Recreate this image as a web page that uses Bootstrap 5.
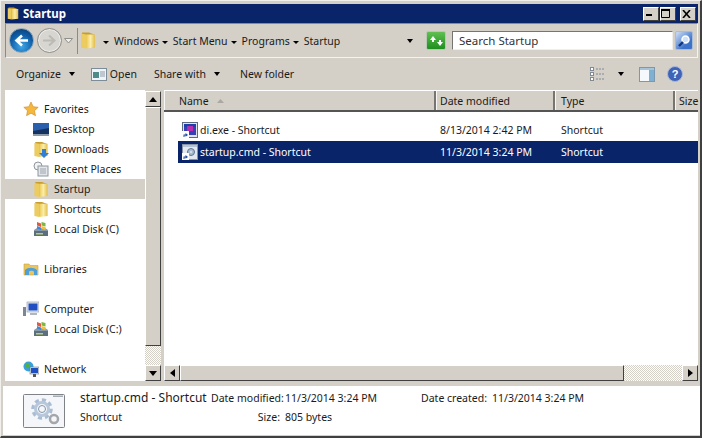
<!DOCTYPE html>
<html lang="en">
<head>
<meta charset="UTF-8">
<title>Startup</title>
<link href="https://cdn.jsdelivr.net/npm/bootstrap@5.3.0/dist/css/bootstrap.min.css" rel="stylesheet">
<style>
html, body { margin: 0; background: #d4d0c8; overflow: hidden; }
body { font-family: "Noto Sans", "Liberation Sans", sans-serif; font-size: 10.5px; line-height: 14px; color: #1a1a1a; }
.win-frame { width: 702px; height: 438px; background: #d4d0c8; border-style: solid; border-width: 1px 2px 2px 1px; border-color: #f2f0ec #404040 #404040 #f2f0ec; padding: 3px 2px 0 4px; }
.win-title { height: 19px; background: #0a246a; color: #fff; font-weight: 700; font-size: 11.5px; padding: 0 2px 0 2px; flex: none; }
.win-title svg { margin-right: 4px; }
.cap-btn { width: 16px; height: 14px; margin-left: 1px; background: #d4d0c8; border: 1px solid; border-color: #fff #404040 #404040 #fff; color: #000; }
.win-nav { height: 35px; border: 1px solid; border-color: #8c8a84 #f4f3ef #f4f3ef #8c8a84; padding: 0 2px 0 3px; flex: none; }
.nav-round { width: 25px; height: 25px; border-radius: 50%; flex: none; }
.nav-back { background: radial-gradient(circle at 50% 75%, #3fa8e8, #0f5ea8 55%, #0a3766); border: 1px solid #8fa5b5; }
.nav-fwd { background: #d8d6d0; border: 1px solid #8f8f8b; margin-left: 3px; box-shadow: inset 0 0 0 1px #eeede9; }
.nav-drop { margin: 0 4px 0 2px; }
.addr-box { width: 340px; height: 26px; padding-left: 2px; border-left: 1px solid #8c8a84; flex: none; }
.addr-crumb { margin-left: 3px; }
.addr-crumb:first-child { margin-left: 7px; }
.addr-crumb i, .tri-down { display: inline-block; width: 0; height: 0; border-style: solid; border-width: 4px 3.5px 0 3.5px; border-color: #000 transparent transparent transparent; }
.addr-crumb i { margin-right: 5px; vertical-align: 1px; border-width: 3px 3.5px 0 3.5px; }
.addr-crumbs { flex: 1; }
.refresh-btn { width: 20px; height: 19px; margin: 0 6px 0 9px; background: linear-gradient(#5fc04f, #1f8f20); border: 1px solid #b9c7b4; border-radius: 2px; flex: none; }
.search-box { width: 221px; height: 19px; background: #fff; padding-left: 6px; border: 1px solid; border-color: #77756f #f0efeb #f0efeb #77756f; flex: none; color: #333; font-size: 11.5px; }
.search-btn { width: 18px; height: 19px; margin-left: 2px; background: linear-gradient(135deg, #cfe0f6, #3d72c9 70%); border: 1px solid #a9bcd8; border-radius: 2px; flex: none; }
.win-tools { height: 32px; padding: 0 15px 0 11px; flex: none; }
.tool-item { flex: none; }
.ms-icon { margin-left: 16px; }
.ms-open { margin-left: 3px; }
.ms-share { margin-left: 17px; }
.ms-folder { margin-left: 20px; }
.ms-views { margin-left: 12px; }
.ms-pane { margin-left: 15px; }
.ms-help { margin-left: 12px; }
.win-body { height: 291px; flex: none; }
.side-pane { width: 140px; background: #fff; padding-top: 9px; flex: none; }
.side-row { height: 20px; padding-left: 18px; }
.side-row svg { margin-right: 5px; flex: none; }
.side-row.side-sub { padding-left: 28px; }
.side-row.side-on { background: #d4d0c8; }
.side-gap { height: 20px; }
.vbar { width: 16px; flex: none; padding-top: 1px; }
.sc-btn { width: 16px; height: 16px; background: #d4d0c8; border: 1px solid; border-color: #fff #404040 #404040 #fff; flex: none; }
.sc-thumb { background: #d4d0c8; border: 1px solid; border-color: #fff #404040 #404040 #fff; }
.sc-hatch { background-color: #fff; background-image: repeating-conic-gradient(#d4d0c8 0 25%, #fff 0 50%); background-size: 2px 2px; }
.sc-vthumb { height: 239px; }
.sc-vhatch { height: 19px; }
.main-pane { width: 534px; margin-left: 3px; padding-top: 1px; flex: none; background: #fff; }
.list-head { height: 21px; background: #d4d0c8; border-bottom: 2px solid #555; flex: none; }
.head-cell { height: 19px; padding-left: 15px; border-right: 2px solid #77756f; box-shadow: inset 1px 0 0 #f7f6f2; }
.cw-name { width: 272px; flex: none; }
.cw-date { width: 119px; flex: none; padding-left: 4px; }
.cw-type { width: 120px; flex: none; padding-left: 6px; }
.cw-size { flex: 1; white-space: nowrap; border-right: 0; padding-left: 4px; }
.list-area { flex: 1; background: #fff; padding: 7px 0 0 14px; }
.file-row { height: 22px; }
.file-row.file-on { background: #0a246a; color: #fff; }
.fc-name { width: 262px; padding-left: 4px; flex: none; }
.fc-name svg { margin-right: 2px; flex: none; }
.fc-date { width: 121px; flex: none; }
.hbar { height: 16px; flex: none; }
.sc-hthumb { width: 444px; flex: none; }
.sc-hmid { flex: 1; }
.win-gapbar { height: 5px; background: #d4d0c8; flex: none; }
.win-details { height: 49px; background: #fff; margin-left: -2px; margin-right: -2px; padding-left: 20px; flex: none; }
.det-icon { margin-right: 15px; flex: none; }
.det-grid { display: grid; grid-template-columns: 131px 74px 136px 71px 1fr; grid-auto-rows: 19px; margin-top: -1px; }
.det-grid > div { white-space: nowrap; }
.det-name { font-size: 12px; }
.det-label { text-align: right; padding-right: 5px; }
</style>
</head>
<body>
<svg width="0" height="0" class="position-absolute">
  <defs>
    <linearGradient id="fg" x1="0" x2="1" y1="0" y2="0"><stop offset="0" stop-color="#e9c64f"/><stop offset=".5" stop-color="#fbeeaa"/><stop offset="1" stop-color="#e2bd4c"/></linearGradient>
    <symbol id="ico-folder" viewBox="0 0 16 18">
      <path d="M2 1h7l5 2v13H2z" fill="#c89d2e"/>
      <path d="M1 2l5 1v14l-5-1z" fill="#eccb60"/>
      <path d="M6 3h9v13l-9 1z" fill="url(#fg)"/>
    </symbol>
    <symbol id="ico-disk" viewBox="0 0 16 16">
      <path d="M1 9l3-2h8l3 2v6H1z" fill="#8a99a8"/>
      <rect x="1" y="10" width="14" height="5" fill="#5c6f7f"/>
      <rect x="3" y="12" width="7" height="1.500" fill="#b9d06a"/>
      <path d="M4 1l4 1.500V6L4 4.500z" fill="#e4593a"/>
      <path d="M8.500 1l4 1v3.500l-4-1z" fill="#7cb644"/>
      <path d="M4 5l4 1.500v2.500l-4-1.500z" fill="#3d86d8"/>
      <path d="M8.500 5l4 1v3l-4-1z" fill="#eec23f"/>
    </symbol>
    <symbol id="ico-shortcut" viewBox="0 0 7 7">
      <rect width="7" height="7" fill="#fff"/>
      <path d="M1.500 6V3.500h2V2L6 4 3.500 5.800V4.600h-1V6z" fill="#1f4e9c"/>
    </symbol>
  </defs>
</svg>

<div class="win-frame d-flex flex-column">
  <div class="win-title d-flex align-items-center">
    <svg width="12" height="15"><use href="#ico-folder"/></svg>
    <span class="flex-grow-1">Startup</span>
    <div class="cap-btn d-flex align-items-end justify-content-center pb-1"><svg width="7" height="2"><rect width="6" height="2"/></svg></div>
    <div class="cap-btn d-flex align-items-center justify-content-center"><svg width="10" height="9"><path d="M.5 1.500h8v7h-8z" fill="none" stroke="#000"/><rect width="9" height="2"/></svg></div>
    <div class="cap-btn d-flex align-items-center justify-content-center ms-1"><svg width="9" height="8"><path d="M1 0l7 8M8 0L1 8" stroke="#000" stroke-width="1.600" fill="none"/></svg></div>
  </div>

  <div class="win-nav d-flex align-items-center">
    <div class="nav-round nav-back d-flex align-items-center justify-content-center"><svg width="15" height="13"><path d="M14 6.500H4M8 1.500l-5.500 5 5.500 5" fill="none" stroke="#fff" stroke-width="2.600"/></svg></div>
    <div class="nav-round nav-fwd d-flex align-items-center justify-content-center"><svg width="15" height="13"><path d="M1 6.500h10M7 1.500l5.500 5-5.500 5" fill="none" stroke="#bcbab5" stroke-width="2"/></svg></div>
    <svg class="nav-drop" width="9" height="6"><path d="M.5.500h8L4.500 5z" fill="#eeeeea" stroke="#8f8f8b"/></svg>
    <div class="addr-box d-flex align-items-center">
      <svg width="16" height="19" class="flex-none"><use href="#ico-folder"/></svg>
      <div class="addr-crumbs d-flex align-items-center">
        <span class="addr-crumb"><i></i>Windows</span>
        <span class="addr-crumb"><i></i>Start Menu</span>
        <span class="addr-crumb"><i></i>Programs</span>
        <span class="addr-crumb"><i></i>Startup</span>
      </div>
      <span class="tri-down me-1"></span>
    </div>
    <div class="refresh-btn d-flex align-items-center justify-content-center"><svg width="15" height="12"><path d="M1 5l3-4 3 4H5v2H3V5zM14 7l-3 4-3-4h2V5h2v2z" fill="#fff"/></svg></div>
    <div class="search-box d-flex align-items-center">Search Startup</div>
    <div class="search-btn d-flex align-items-center justify-content-center"><svg width="14" height="14"><circle cx="8.500" cy="5.500" r="3.500" fill="#cfe3fb" stroke="#fff" stroke-width="1.500"/><path d="M6 8l-4 4" stroke="#12357f" stroke-width="2.400"/></svg></div>
  </div>

  <div class="win-tools d-flex align-items-center">
    <span class="tool-item">Organize</span><span class="tri-down ms-2"></span>
    <svg class="tool-item ms-icon" width="16" height="13"><rect x=".5" y=".5" width="15" height="12" fill="#f0f4f8" stroke="#7d8c99"/><rect x="2" y="4" width="6" height="6" fill="#4f8a8a"/><path d="M9 4h5M9 6h5M9 8h5" stroke="#8d9aa6"/></svg>
    <span class="tool-item ms-open">Open</span>
    <span class="tool-item ms-share">Share with</span><span class="tri-down ms-2"></span>
    <span class="tool-item ms-folder">New folder</span>
    <span class="flex-grow-1"></span>
    <svg class="tool-item" width="16" height="15"><g fill="#fff" stroke="#7f8a94"><rect x=".5" y=".5" width="3" height="3"/><rect x=".5" y="5.500" width="3" height="3"/><rect x=".5" y="10.500" width="3" height="3"/></g><path d="M6 2h9M6 7h9M6 12h9" stroke="#7f8a94" stroke-dasharray="2 1"/></svg>
    <span class="tri-down ms-views"></span>
    <svg class="tool-item ms-pane" width="16" height="15"><rect x=".5" y=".5" width="15" height="14" fill="#f5f9fc" stroke="#7c98ae"/><rect x="1" y="1" width="14" height="2" fill="#a6c3d8"/><rect x="10" y="3" width="5" height="11" fill="#7fb0d2"/></svg>
    <svg class="tool-item ms-help" width="16" height="16"><circle cx="8" cy="8" r="7.500" fill="#3f63b5" stroke="#aab9d8"/><text x="8" y="12" text-anchor="middle" fill="#fff" font-size="11" font-weight="700" font-family="Liberation Sans, sans-serif">?</text></svg>
  </div>

  <div class="win-body d-flex">
    <div class="side-pane">
      <div class="side-row d-flex align-items-center"><svg width="16" height="16"><path d="M8 1l2.200 4.700 5 .6-3.700 3.400 1 5L8 12.200 3.500 14.700l1-5L.8 6.300l5-.6z" fill="#f5b73c" stroke="#c98a2a" stroke-width=".6"/></svg>Favorites</div>
      <div class="side-row side-sub d-flex align-items-center"><svg width="16" height="13"><rect width="16" height="12" fill="#2a5fae"/><path d="M0 8l16-3v7H0z" fill="#15315f"/><rect y="11" width="16" height="2" fill="#8b99a8"/></svg>Desktop</div>
      <div class="side-row side-sub d-flex align-items-center"><svg width="16" height="17"><use href="#ico-folder"/><path d="M9 8h4v4h3l-5 5-5-5h3z" fill="#2f80d6"/></svg>Downloads</div>
      <div class="side-row side-sub d-flex align-items-center"><svg width="16" height="16"><circle cx="5" cy="5" r="4" fill="#f3f3f1" stroke="#8d979f"/><rect x="5" y="5" width="10" height="10" fill="#e3e6e9" stroke="#8d979f"/><path d="M7 8h6M7 10h6M7 12h6" stroke="#9ba4ac"/></svg>Recent Places</div>
      <div class="side-row side-sub side-on d-flex align-items-center"><svg width="16" height="17"><use href="#ico-folder"/></svg>Startup</div>
      <div class="side-row side-sub d-flex align-items-center"><svg width="16" height="17"><use href="#ico-folder"/></svg>Shortcuts</div>
      <div class="side-row side-sub d-flex align-items-center"><svg width="16" height="16"><use href="#ico-disk"/></svg>Local Disk (C)</div>
      <div class="side-gap"></div>
      <div class="side-row d-flex align-items-center"><svg width="16" height="14"><path d="M1 2h5l1 1.500h8V13H1z" fill="#ecc65c" stroke="#c5a244" stroke-width=".6"/><path d="M2 13V8c3-3 9-3 12 0v5h-3V9.500c-1-1-4-1-5 0V13z" fill="#4f9fd8"/></svg>Libraries</div>
      <div class="side-gap"></div>
      <div class="side-row d-flex align-items-center"><svg width="16" height="16"><rect x="4" y="1" width="12" height="10" fill="#dfe6ee" stroke="#8a98a6" stroke-width=".6"/><rect x="5.500" y="2.500" width="9" height="7" fill="#1f4fc0"/><rect x="7" y="12" width="7" height="2" fill="#aeb7c0"/><rect y="6" width="3" height="9" fill="#7d8791"/></svg>Computer</div>
      <div class="side-row side-sub d-flex align-items-center"><svg width="16" height="16"><use href="#ico-disk"/></svg>Local Disk (C:)</div>
      <div class="side-gap"></div>
      <div class="side-row d-flex align-items-center"><svg width="16" height="16"><circle cx="5.500" cy="5.500" r="5" fill="#3aa0d8"/><path d="M2 3c2-2 4-1 5 1S4 7 3 6z" fill="#4fb04a"/><rect x="7" y="6" width="9" height="7" fill="#d5e0ea" stroke="#6a7a8a" stroke-width=".6"/><rect x="8" y="7" width="7" height="5" fill="#1f4fc0"/><rect x="10" y="13" width="3" height="3" fill="#555"/></svg>Network</div>
    </div>

    <div class="vbar d-flex flex-column">
      <div class="sc-btn d-flex align-items-center justify-content-center"><svg width="8" height="5"><path d="M4 0l4 5H0z"/></svg></div>
      <div class="sc-thumb sc-vthumb"></div>
      <div class="sc-hatch sc-vhatch"></div>
      <div class="sc-btn d-flex align-items-center justify-content-center"><svg width="8" height="5"><path d="M0 0h8L4 5z"/></svg></div>
    </div>

    <div class="main-pane d-flex flex-column">
      <div class="list-head d-flex">
        <div class="head-cell cw-name d-flex align-items-center">Name<svg class="ms-2" width="7" height="4"><path d="M3.500 0l3.500 4H0z" fill="#aaa8a3"/></svg></div>
        <div class="head-cell cw-date d-flex align-items-center">Date modified</div>
        <div class="head-cell cw-type d-flex align-items-center">Type</div>
        <div class="head-cell cw-size d-flex align-items-center">Size</div>
      </div>
      <div class="list-area">
        <div class="file-row d-flex align-items-center">
          <div class="fc-name d-flex align-items-center">
            <svg width="16" height="16"><rect x=".5" y=".5" width="15" height="15" fill="#dfe3ea" stroke="#5d6b80"/><rect x="2" y="2" width="12" height="3" fill="#1f3fa8"/><rect x="2" y="5" width="12" height="8" fill="#3b3fb5"/><rect x="5" y="4" width="6" height="5" fill="#b52fb0"/><use href="#ico-shortcut" x="0" y="9" width="7" height="7"/></svg>
            <span>di.exe - Shortcut</span>
          </div>
          <div class="fc-date">8/13/2014 2:42 PM</div>
          <div>Shortcut</div>
        </div>
        <div class="file-row file-on d-flex align-items-center">
          <div class="fc-name d-flex align-items-center">
            <svg width="16" height="16"><rect x=".5" y=".5" width="15" height="15" fill="#e4e9f0" stroke="#8894a8"/><rect x="1" y="1" width="14" height="2" fill="#b6c3d6"/><circle cx="9" cy="8" r="3.500" fill="#a9bcd2" stroke="#5f7590"/><circle cx="9" cy="8" r="1" fill="#e4e9f0"/><use href="#ico-shortcut" x="0" y="9" width="7" height="7"/></svg>
            <span>startup.cmd - Shortcut</span>
          </div>
          <div class="fc-date">11/3/2014 3:24 PM</div>
          <div>Shortcut</div>
        </div>
      </div>
      <div class="hbar d-flex">
        <div class="sc-btn d-flex align-items-center justify-content-center"><svg width="5" height="8"><path d="M5 0v8L0 4z"/></svg></div>
        <div class="sc-thumb sc-hthumb"></div>
        <div class="sc-hatch sc-hmid"></div>
        <div class="sc-btn d-flex align-items-center justify-content-center"><svg width="5" height="8"><path d="M0 0v8l5-4z"/></svg></div>
      </div>
    </div>
  </div>

  <div class="win-gapbar"></div>
  <div class="win-details d-flex align-items-center">
    <svg class="det-icon" width="42" height="34"><rect x=".5" y=".5" width="41" height="33" rx="1" fill="#f4f6f9" stroke="#7f8388"/><rect x="30" y="1.500" width="10" height="1.500" fill="#a7adb5"/><circle cx="19" cy="15" r="9" fill="none" stroke="#a9bdd4" stroke-width="3.500" stroke-dasharray="4 3"/><circle cx="19" cy="15" r="6.500" fill="none" stroke="#b8c8da" stroke-width="3"/><circle cx="19" cy="15" r="3.500" fill="#f4f6f9" stroke="#8296ad"/><circle cx="31" cy="25" r="4" fill="none" stroke="#a3a7ab" stroke-width="2.500"/></svg>
    <div class="det-grid">
      <div class="det-name">startup.cmd - Shortcut</div>
      <div class="det-label">Date modified:</div>
      <div>11/3/2014 3:24 PM</div>
      <div class="det-label">Date created:</div>
      <div>11/3/2014 3:24 PM</div>
      <div>Shortcut</div>
      <div class="det-label">Size:</div>
      <div>805 bytes</div>
    </div>
  </div>
</div>
<script src="https://cdn.jsdelivr.net/npm/bootstrap@5.3.0/dist/js/bootstrap.bundle.min.js"></script>
</body>
</html>
